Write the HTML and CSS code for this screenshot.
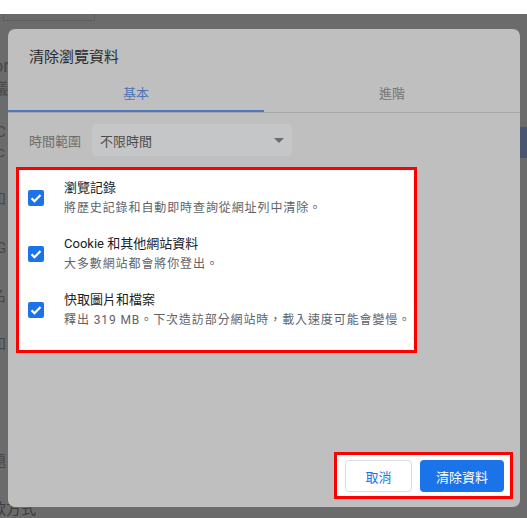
FILE: index.html
```html
<!DOCTYPE html>
<html lang="zh-Hant">
<head>
<meta charset="utf-8">
<link rel="stylesheet" href="styles.css">
</head>
<body>
<div class="topbar"></div>
<div class="page">
  <div class="page-box"></div>
  <div class="page-col">
    <span class="frag f1">or</span>
    <span class="frag f2">議</span>
    <span class="frag f3">C</span>
    <span class="frag f4">c</span>
    <span class="frag f5">和</span>
    <span class="frag f6">G</span>
    <span class="frag f7">名</span>
    <span class="frag f8">和</span>
    <span class="frag f9">題</span>
    <span class="frag f10">款方式</span>
  </div>
  <div class="page-btn"></div>
</div>

<div class="dialog">
  <div class="title">清除瀏覽資料</div>
  <div class="tabs">
    <div class="tab active">基本</div>
    <div class="tab">進階</div>
  </div>
  <div class="range">
    <span class="range-label">時間範圍</span>
    <div class="select">
      <span>不限時間</span>
      <svg class="arrow" width="10" height="5" viewBox="0 0 10 5"><path d="M0 0h10L5 5z" fill="#6b6b6b"/></svg>
    </div>
  </div>
  <div class="options">
    <div class="item">
      <span class="cb"><svg width="16" height="16" viewBox="0 0 16 16"><path d="M3.5 8.2l3 3 6-6.2" fill="none" stroke="#fff" stroke-width="2.2"/></svg></span>
      <div class="txt">
        <div class="t">瀏覽記錄</div>
        <div class="s">將歷史記錄和自動即時查詢從網址列中清除。</div>
      </div>
    </div>
    <div class="item">
      <span class="cb"><svg width="16" height="16" viewBox="0 0 16 16"><path d="M3.5 8.2l3 3 6-6.2" fill="none" stroke="#fff" stroke-width="2.2"/></svg></span>
      <div class="txt">
        <div class="t">Cookie 和其他網站資料</div>
        <div class="s">大多數網站都會將你登出。</div>
      </div>
    </div>
    <div class="item">
      <span class="cb"><svg width="16" height="16" viewBox="0 0 16 16"><path d="M3.5 8.2l3 3 6-6.2" fill="none" stroke="#fff" stroke-width="2.2"/></svg></span>
      <div class="txt">
        <div class="t">快取圖片和檔案</div>
        <div class="s">釋出 319 MB。下次造訪部分網站時，載入速度可能會變慢。</div>
      </div>
    </div>
  </div>
  <div class="footer">
    <div class="btns">
      <button class="btn cancel">取消</button>
      <button class="btn primary">清除資料</button>
    </div>
  </div>
</div>
</body>
</html>
```

FILE: styles.css
```css
html, body {
  margin: 0;
  padding: 0;
}
body {
  width: 527px;
  height: 518px;
  overflow: hidden;
  background: #6b6b6b;
  font-family: Roboto, "Noto Sans CJK TC", sans-serif;
  position: relative;
}
.topbar {
  height: 14px;
  background: #ffffff;
}
.page {
  height: 504px;
  position: relative;
}
.page-box {
  position: absolute;
  left: 3px;
  top: 0;
  width: 90px;
  height: 6px;
  border: 1px solid #5e5e5e;
  border-top: none;
}
.page-btn {
  position: absolute;
  left: 520px;
  top: 113px;
  width: 7px;
  height: 31px;
  background: #4a5670;
}
.page-col {
  position: absolute;
  left: 0;
  top: 0;
  width: 60px;
  height: 504px;
}
.frag {
  position: absolute;
  font-size: 15px;
  color: #474747;
  line-height: 16px;
  white-space: nowrap;
}
.f1 { top: 44px; left: -7px; font-size: 18px; }
.f2 { top: 67px; left: -7px; }
.f3 { top: 110px; left: -4px; }
.f4 { top: 130px; left: -3px; }
.f5 { top: 177px; left: -9px; }
.f6 { top: 226px; left: -4px; }
.f7 { top: 274px; left: -9px; }
.f8 { top: 322px; left: -9px; }
.f9 { top: 439px; left: -9px; }
.f10 { top: 487px; left: -9px; color: #3c3c3c; }

.dialog {
  position: absolute;
  left: 8px;
  top: 29px;
  width: 512px;
  height: 478px;
  background: #bfbfbf;
  border-radius: 7px;
  display: flex;
  flex-direction: column;
}
.title {
  padding: 18px 0 0 21px;
  font-size: 15px;
  line-height: 20px;
  color: #2b2b2b;
}
.tabs {
  margin-top: 8px;
  display: flex;
  border-bottom: 1px solid #a8a8a8;
}
.tab {
  flex: 1;
  height: 35px;
  display: flex;
  align-items: center;
  justify-content: center;
  font-size: 13px;
  color: #767676;
  border-bottom: 2px solid transparent;
}
.tab.active {
  color: #4d74b8;
  border-bottom-color: #4a77bf;
}
.range {
  margin-top: 11px;
  display: flex;
  align-items: center;
  padding-left: 21px;
}
.range-label {
  width: 63px;
  font-size: 13px;
  color: #6e6e6e;
}
.select {
  width: 200px;
  height: 32px;
  box-sizing: border-box;
  background: #c5c6c7;
  border-radius: 4px;
  display: flex;
  align-items: center;
  justify-content: space-between;
  padding: 0 8px 0 8px;
  font-size: 13px;
  color: #4d4d4d;
}
.options {
  margin: 11px 0 0 8px;
  width: 401px;
  box-sizing: border-box;
  border: 3px solid #ff0000;
  background: #ffffff;
  padding: 0 0 12px 9px;
}
.item {
  height: 56px;
  display: flex;
  align-items: center;
}
.cb {
  width: 16px;
  height: 16px;
  background: #1a73e8;
  border-radius: 2px;
  display: flex;
  flex-shrink: 0;
}
.txt {
  margin-left: 20px;
  white-space: nowrap;
}
.t {
  font-size: 13px;
  line-height: 20px;
  color: #202124;
}
.s {
  font-size: 12px;
  line-height: 20px;
  color: #5f6368;
  letter-spacing: 0.9px;
}
.footer {
  margin-top: auto;
  display: flex;
  justify-content: flex-end;
  padding: 0 7px 8px 0;
}
.btns {
  border: 3px solid #ff0000;
  background: #ffffff;
  padding: 5px 6px 4px 8px;
  display: flex;
  gap: 8px;
}
.btn {
  height: 32px;
  border-radius: 4px;
  font-family: Roboto, "Noto Sans CJK TC", sans-serif;
  font-size: 13px;
  font-weight: 400;
  box-sizing: border-box;
  padding: 0;
}
.cancel {
  width: 67px;
  background: #ffffff;
  border: 1px solid #dadce0;
  color: #1a73e8;
}
.primary {
  width: 84px;
  background: #1a73e8;
  border: none;
  color: #ffffff;
}
```
